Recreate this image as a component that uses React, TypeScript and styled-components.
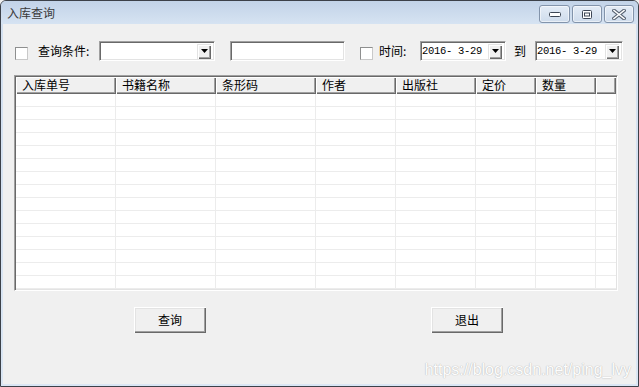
import React from "react";
import styled, { createGlobalStyle } from "styled-components";

const columns = [
  { title: "入库单号", width: 100 },
  { title: "书籍名称", width: 100 },
  { title: "条形码", width: 100 },
  { title: "作者", width: 80 },
  { title: "出版社", width: 80 },
  { title: "定价", width: 60 },
  { title: "数量", width: 60 },
];

const rowCount = 15;

const DownArrow = () => (
  <svg width="7" height="4" viewBox="0 0 7 4">
    <polygon points="0,0 7,0 3.5,4" fill="#000" />
  </svg>
);

const App = () => {
  return (
    <>
      <GlobalStyle />
      <Window>
        <TitleBar>
          <Title>入库查询</Title>
          <Captions>
            <CaptionButton $w={31}>
              <svg width="12" height="6" viewBox="0 0 12 6">
                <rect x="0.5" y="1.5" width="11" height="4" rx="1" fill="#fff" stroke="#3d4655" />
              </svg>
            </CaptionButton>
            <CaptionButton $w={30}>
              <svg width="10" height="9" viewBox="0 0 10 9">
                <rect x="0.5" y="0.5" width="9" height="8" rx="1" fill="#fff" stroke="#3d4655" />
                <rect x="2.5" y="3" width="5" height="3" fill="none" stroke="#3d4655" />
              </svg>
            </CaptionButton>
            <CaptionButton $w={30}>
              <svg width="14" height="11" viewBox="0 0 14 11">
                <path d="M2 1.5 L12 9.5 M12 1.5 L2 9.5" stroke="#5b6675" strokeWidth="3.6" strokeLinecap="square" />
                <path d="M2 1.5 L12 9.5 M12 1.5 L2 9.5" stroke="#fff" strokeWidth="1.6" strokeLinecap="square" />
              </svg>
            </CaptionButton>
          </Captions>
        </TitleBar>
        <Client>
          <ToolRow>
            <CheckBox />
            <Label $ml={10} $w={61}>查询条件:</Label>
            <ComboBox $w={116}>
              <ComboText />
              <DropButton>
                <DownArrow />
              </DropButton>
            </ComboBox>
            <TextBox $ml={15} $w={115} />
            <CheckBox $ml={15} />
            <Label $ml={6} $w={41}>时间:</Label>
            <ComboBox $w={86}>
              <ComboText>2016- 3-29</ComboText>
              <DropButton>
                <DownArrow />
              </DropButton>
            </ComboBox>
            <Label $ml={8} $w={12}>到</Label>
            <ComboBox $ml={9} $w={88}>
              <ComboText>2016- 3-29</ComboText>
              <DropButton>
                <DownArrow />
              </DropButton>
            </ComboBox>
          </ToolRow>

          <ListView>
            <HeaderRow>
              {columns.map((c) => (
                <HeaderCell key={c.title} $w={c.width}>
                  {c.title}
                </HeaderCell>
              ))}
              <HeaderCell $fill />
            </HeaderRow>
            {Array.from({ length: rowCount }).map((_, i) => (
              <Row key={i}>
                {columns.map((c) => (
                  <Cell key={c.title} $w={c.width} />
                ))}
                <Cell $fill />
              </Row>
            ))}
          </ListView>

          <ButtonRow>
            <PushButton>查询</PushButton>
            <PushButton>退出</PushButton>
          </ButtonRow>

          <Watermark>https://blog.csdn.net/ping_lvy</Watermark>
        </Client>
      </Window>
    </>
  );
};

export default App;

const GlobalStyle = createGlobalStyle`
  html, body {
    margin: 0;
    padding: 0;
    background: #f0f0f0;
  }
  * {
    box-sizing: border-box;
  }
`;

const cjk = `"Noto Sans CJK SC", "Noto Sans", sans-serif`;

const Window = styled.div`
  width: 639px;
  height: 387px;
  border: 1px solid #3c4149;
  border-radius: 6px 6px 0 0;
  background: linear-gradient(#c3d4e9 0px, #d3e0f0 24px, #dae6f4 100%);
  display: flex;
  flex-direction: column;
  overflow: hidden;
`;

const TitleBar = styled.div`
  height: 23px;
  display: flex;
  align-items: flex-start;
  justify-content: space-between;
  padding: 0 4px 0 6px;
  background: linear-gradient(#c2d3e8, #d6e3f2);
`;

const Title = styled.span`
  margin-top: 5px;
  font: 12px/14px ${cjk};
  color: #3a3a3a;
`;

const Captions = styled.div`
  display: flex;
  gap: 2px;
  margin-top: 4px;
`;

const CaptionButton = styled.div<{ $w: number }>`
  width: ${({ $w }) => $w}px;
  height: 18px;
  border: 1px solid #8394ab;
  border-radius: 3px;
  background: linear-gradient(#e4ecf6, #cfdcec);
  box-shadow: inset 0 0 0 1px rgba(255, 255, 255, 0.55);
  display: flex;
  align-items: center;
  justify-content: center;
`;

const Client = styled.div`
  position: relative;
  flex: 1;
  margin: 0 2px 2px;
  background: #f0f0f0;
  display: flex;
  flex-direction: column;
`;

const ToolRow = styled.div`
  display: flex;
  align-items: center;
  height: 20px;
  margin-top: 17px;
  padding-left: 12px;
`;

const CheckBox = styled.div<{ $ml?: number }>`
  width: 13px;
  height: 13px;
  margin-left: ${({ $ml }) => $ml ?? 0}px;
  transform: translateY(2px);
  background: #fff;
  border: 1px solid;
  border-color: #8e8f8f #c9c9c9 #c9c9c9 #8e8f8f;
`;

const Label = styled.span<{ $ml?: number; $w: number }>`
  width: ${({ $w }) => $w}px;
  margin-left: ${({ $ml }) => $ml ?? 0}px;
  font: 12px/14px ${cjk};
  color: #000;
  white-space: nowrap;
`;

const sunken = `
  background: #fff;
  border: 1px solid;
  border-color: #a0a0a0 #fff #fff #a0a0a0;
  box-shadow: inset 1px 1px 0 #696969, inset -1px -1px 0 #e3e3e3;
`;

const ComboBox = styled.div<{ $ml?: number; $w: number }>`
  width: ${({ $w }) => $w}px;
  height: 20px;
  margin-left: ${({ $ml }) => $ml ?? 0}px;
  ${sunken}
  display: flex;
  align-items: center;
  padding: 0 3px 0 1px;
`;

const ComboText = styled.span`
  flex: 1;
  font: 10.5px/14px "Liberation Mono", "DejaVu Sans Mono", monospace;
  letter-spacing: -0.3px;
  color: #000;
  white-space: nowrap;
  overflow: hidden;
`;

const DropButton = styled.div`
  width: 14px;
  height: 15px;
  flex: none;
  background: #f0f0f0;
  box-shadow: inset 1px 1px 0 #e3e3e3, inset 2px 2px 0 #fff,
    inset -1px -1px 0 #696969, inset -2px -2px 0 #a0a0a0;
  display: flex;
  align-items: center;
  justify-content: center;
`;

const TextBox = styled.div<{ $ml?: number; $w: number }>`
  width: ${({ $w }) => $w}px;
  height: 20px;
  margin-left: ${({ $ml }) => $ml ?? 0}px;
  ${sunken}
`;

const ListView = styled.div`
  width: 604px;
  height: 216px;
  margin: 14px 0 0 11px;
  ${sunken}
  display: flex;
  flex-direction: column;
  padding: 1px;
  overflow: hidden;
`;

const HeaderRow = styled.div`
  display: flex;
  height: 17px;
  flex: none;
`;

const HeaderCell = styled.div<{ $w?: number; $fill?: boolean }>`
  width: ${({ $w }) => ($w ? `${$w}px` : "auto")};
  flex: ${({ $fill }) => ($fill ? 1 : "none")};
  height: 17px;
  padding-left: 6px;
  background: #f0f0f0;
  box-shadow: inset 1px 1px 0 #fff, inset -1px -1px 0 #696969,
    inset -2px -2px 0 #a0a0a0;
  font: 12px/16px ${cjk};
  color: #000;
  white-space: nowrap;
`;

const Row = styled.div`
  display: flex;
  height: 13px;
  flex: none;
  border-bottom: 1px solid #ececec;
`;

const Cell = styled.div<{ $w?: number; $fill?: boolean }>`
  width: ${({ $w }) => ($w ? `${$w}px` : "auto")};
  flex: ${({ $fill }) => ($fill ? 1 : "none")};
  border-right: ${({ $fill }) => ($fill ? "none" : "1px solid #ececec")};
`;

const ButtonRow = styled.div`
  display: flex;
  gap: 225px;
  margin-top: 16px;
  padding-left: 131px;
`;

const PushButton = styled.div`
  width: 72px;
  height: 26px;
  background: #f0f0f0;
  box-shadow: inset 1px 1px 0 #fff, inset -1px -1px 0 #696969,
    inset -2px -2px 0 #a0a0a0, inset 2px 2px 0 #e3e3e3;
  font: 12px/26px ${cjk};
  color: #000;
  text-align: center;
`;

const Watermark = styled.span`
  position: absolute;
  right: 5px;
  bottom: 4px;
  font: 16px/20px "Liberation Sans", Arial, sans-serif;
  color: #fdfdfd;
  text-shadow: 0 0 1px #b5b5b5, 0 0 1px #c8c8c8;
  white-space: nowrap;
`;
